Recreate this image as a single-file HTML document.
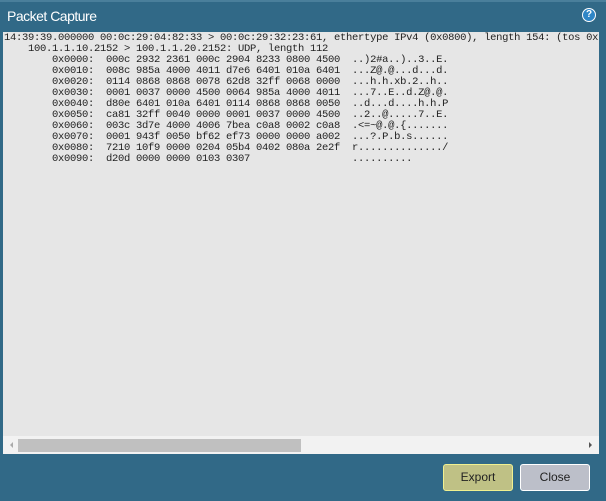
<!DOCTYPE html>
<html><head><style>
body{margin:0;width:606px;height:501px;background:#316987;position:relative;overflow:hidden;font-family:"Liberation Sans",sans-serif}
.top{position:absolute;left:0;top:0;width:606px;height:2px;background:#4a7f9b}
.title{position:absolute;left:7px;top:8px;color:#fff;font-size:14px;letter-spacing:-0.5px}
.help{position:absolute;left:582px;top:8px;width:14px;height:14px;border-radius:50%;background:#2f86c6;border:1px solid #fff;box-sizing:border-box;color:#fff;font-size:10px;font-weight:bold;text-align:center;line-height:12px}
.content{position:absolute;left:3px;top:32px;width:596px;height:422px;background:#e6e6e6;overflow:hidden}
pre{margin:0;position:absolute;left:1px;top:1px;font-family:"Liberation Mono",monospace;font-size:10.5px;letter-spacing:-0.3px;line-height:11px;color:#222;white-space:pre}
.sb{position:absolute;left:0;top:404px;width:596px;height:18px;background:#f2f2f2}
.thumb{position:absolute;left:15px;top:3px;width:283px;height:13px;background:#c0c0c0}
.al{position:absolute;left:7px;top:6px;width:0;height:0;border-top:3px solid transparent;border-bottom:3px solid transparent;border-right:3px solid #aaa}
.ar{position:absolute;left:586px;top:6px;width:0;height:0;border-top:3px solid transparent;border-bottom:3px solid transparent;border-left:3px solid #555}
.btn{position:absolute;top:464px;width:70px;height:27px;border-radius:3px;box-sizing:border-box;font-size:12px;text-align:center;line-height:25px;color:#222}
.export{left:443px;background:#bfc185;border:1px solid #f0f090}
.close{left:520px;background:#bcbfc9;border:1px solid #fff}
</style></head><body>
<div class="top"></div>
<div class="title">Packet Capture</div>
<div class="help">?</div>
<div class="content">
<pre>14:39:39.000000 00:0c:29:04:82:33 &gt; 00:0c:29:32:23:61, ethertype IPv4 (0x0800), length 154: (tos 0x
    100.1.1.10.2152 &gt; 100.1.1.20.2152: UDP, length 112
        0x0000:  000c 2932 2361 000c 2904 8233 0800 4500  ..)2#a..)..3..E.
        0x0010:  008c 985a 4000 4011 d7e6 6401 010a 6401  ...Z@.@...d...d.
        0x0020:  0114 0868 0868 0078 62d8 32ff 0068 0000  ...h.h.xb.2..h..
        0x0030:  0001 0037 0000 4500 0064 985a 4000 4011  ...7..E..d.Z@.@.
        0x0040:  d80e 6401 010a 6401 0114 0868 0868 0050  ..d...d....h.h.P
        0x0050:  ca81 32ff 0040 0000 0001 0037 0000 4500  ..2..@.....7..E.
        0x0060:  003c 3d7e 4000 4006 7bea c0a8 0002 c0a8  .&lt;=~@.@.{.......
        0x0070:  0001 943f 0050 bf62 ef73 0000 0000 a002  ...?.P.b.s......
        0x0080:  7210 10f9 0000 0204 05b4 0402 080a 2e2f  r............../
        0x0090:  d20d 0000 0000 0103 0307                 ..........</pre>
<div class="sb"><div class="al"></div><div class="thumb"></div><div class="ar"></div></div>
</div>
<div class="btn export">Export</div>
<div class="btn close">Close</div>
</body></html>
